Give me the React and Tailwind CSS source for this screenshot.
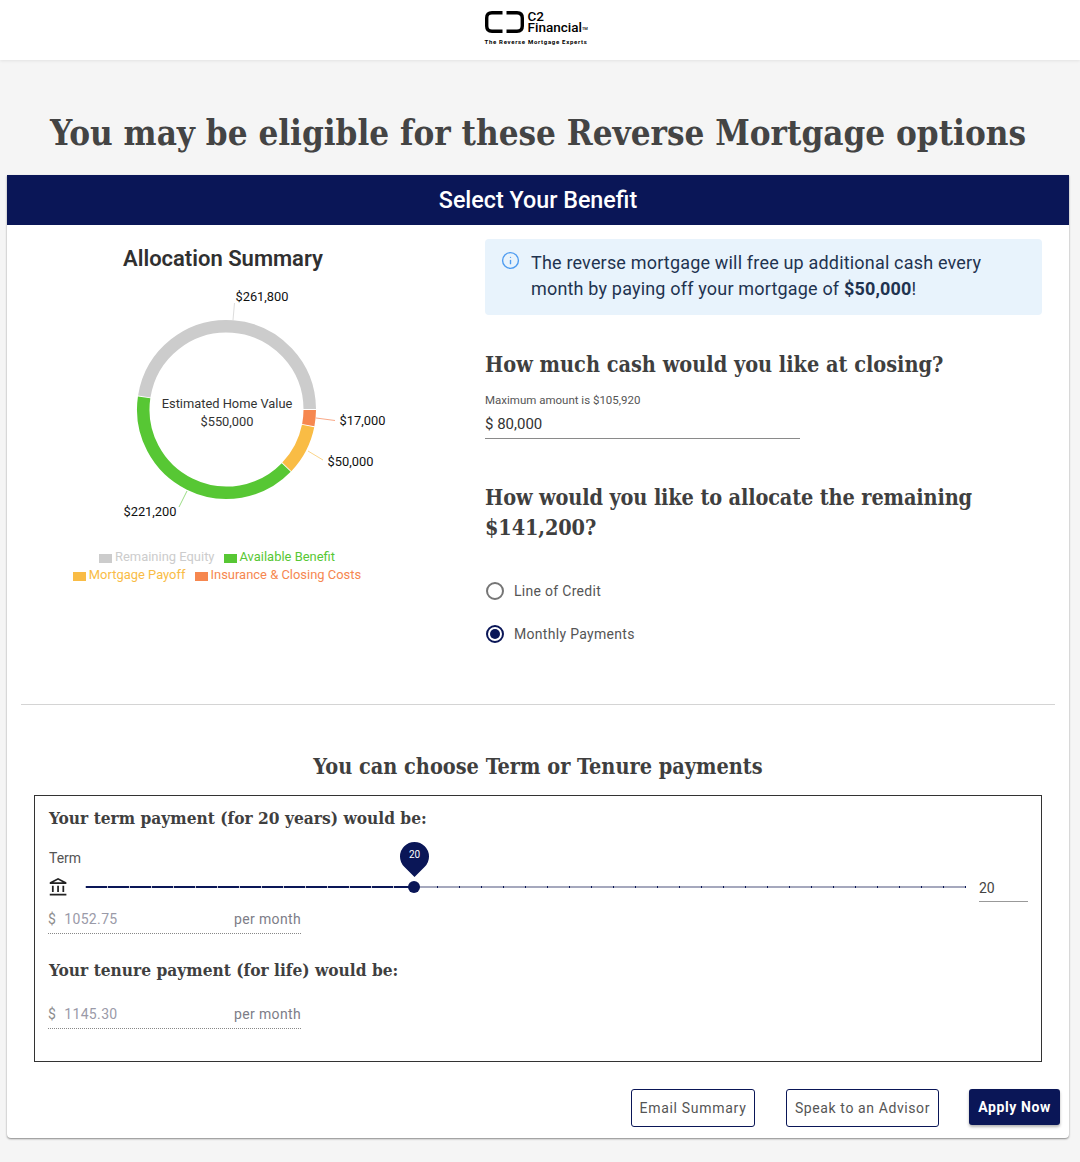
import { Info } from 'lucide-react';
import { MdOutlineAccountBalance } from 'react-icons/md';

const navy = 'bg-[#0a1657]';

// donut segments, clockwise from 3 o'clock
const segments = [
  { value: 17000, color: '#f6874f' },
  { value: 50000, color: '#f9bc45' },
  { value: 221200, color: '#57c734' },
  { value: 261800, color: '#cccccc' },
];

const leaders = [
  { d: 'M233 320 L234.5 303', color: '#dddddd' },
  { d: 'M316 418 L335 420.5', color: '#f9a988' },
  { d: 'M308 451 L323 460', color: '#fbd58a' },
  { d: 'M187 491 L179 507', color: '#9bdd85' },
];

const labels = [
  { x: 262, y: 301, text: '$261,800' },
  { x: 362.5, y: 425, text: '$17,000' },
  { x: 350.5, y: 466, text: '$50,000' },
  { x: 150, y: 516, text: '$221,200' },
];

function arcPath(startDeg, endDeg, r) {
  const cx = 226.5;
  const cy = 409.5;
  const a = (startDeg * Math.PI) / 180;
  const b = (endDeg * Math.PI) / 180;
  const large = endDeg - startDeg > 180 ? 1 : 0;
  return `M${cx + r * Math.cos(a)} ${cy + r * Math.sin(a)} A${r} ${r} 0 ${large} 1 ${cx + r * Math.cos(b)} ${cy + r * Math.sin(b)}`;
}

function Donut() {
  let angle = 0;
  const arcs = segments.map((s) => {
    const start = angle;
    angle += (s.value / 550000) * 360;
    return { ...s, start, end: angle };
  });
  return (
    <svg width="433" height="250" viewBox="7 280 433 250" className="block">
      {leaders.map((l) => (
        <path key={l.d} d={l.d} stroke={l.color} strokeWidth="1" fill="none" />
      ))}
      {arcs.map((a) => (
        <path key={a.color} d={arcPath(a.start + 0.3, a.end - 0.3, 83.25)} stroke={a.color} strokeWidth="12.5" fill="none" />
      ))}
      <text x="227" y="408" textAnchor="middle" fontSize="12.85" fill="#333333">Estimated Home Value</text>
      <text x="227" y="426" textAnchor="middle" fontSize="12.85" fill="#333333">$550,000</text>
      {labels.map((l) => (
        <text key={l.text} x={l.x} y={l.y} textAnchor="middle" fontSize="12.85" fill="#111111">{l.text}</text>
      ))}
    </svg>
  );
}

function LegendItem({ swatch, text, label }) {
  return (
    <span className="flex items-center">
      <span className={`w-[13px] h-[9px] mr-[3px] mt-[2px] ${swatch}`} />
      <span className={text}>{label}</span>
    </span>
  );
}

function Radio({ checked, label }) {
  return (
    <label className="flex items-center h-[24px] ml-[1px]">
      <span className={`w-[18px] h-[18px] rounded-full border-2 flex items-center justify-center ${checked ? 'border-[#0a1657]' : 'border-[#757575]'}`}>
        {checked && <span className="w-[10px] h-[10px] rounded-full bg-[#0a1657]" />}
      </span>
      <span className="ml-[10px] text-sm tracking-[0.3px] text-[#555555]">{label}</span>
    </label>
  );
}

function PerMonth({ value }) {
  return (
    <div className="w-[253px] flex items-center justify-between border-b border-dotted border-[#888888] h-[29px] text-sm tracking-[0.35px] text-[#9a9aa8]">
      <span>
        <span className="mr-[8px] text-[#8d8d8d]">$</span>
        {value}
      </span>
      <span className="text-[#7d7d87]">per month</span>
    </div>
  );
}

function Slider() {
  const ticks = Array.from({ length: 41 });
  return (
    <div className="relative flex-1 h-[2px] bg-[#a5a8bd]">
      <div className="absolute left-0 top-0 h-[2px] w-[329px] bg-[#0a1657]" />
      <div className="absolute inset-0 flex justify-between">
        {ticks.map((_, i) => (
          <span key={i} className={`w-[1px] h-[2px] ${i < 15 ? 'bg-[#c4c6d4]' : 'bg-[#0a1657]'}`} />
        ))}
      </div>
      <span className="absolute left-[323px] top-[-5px] w-[12px] h-[12px] rounded-full bg-[#0a1657]" />
      <div className="absolute left-[315px] top-[-44px] w-[29px] h-[29px] rounded-full rounded-br-none rotate-45 bg-[#0a1657]" />
      <span className="absolute left-[315px] top-[-41px] w-[29px] text-center text-[10px] leading-[20px] text-white">20</span>
    </div>
  );
}

export default function App() {
  const slab = "font-['DejaVu_Serif_Condensed','DejaVu_Serif',serif] font-bold [font-stretch:condensed]";
  return (
    <div className="min-h-[1162px] bg-[#f5f5f5] font-['Roboto',sans-serif] text-[#3f3f3f]">
      <header className="h-[60px] bg-white shadow-[0_1px_3px_rgba(0,0,0,0.08)] flex justify-center">
        <div className="w-[103px] mr-[8px] pt-[11px]">
          <div className="flex items-start">
            <svg width="39" height="22" viewBox="0 0 39 22" fill="none" stroke="#000" strokeWidth="3.4" className="shrink-0">
              <path d="M17.5 1.7 H7 Q1.7 1.7 1.7 7 V15 Q1.7 20.3 7 20.3 H17.5" />
              <path d="M21.5 1.7 H32 Q37.3 1.7 37.3 7 V15 Q37.3 20.3 32 20.3 H21.5" />
            </svg>
            <div className="ml-[4px] text-[13.5px] leading-[11px] font-medium text-black">
              <div>C2</div>
              <div className="whitespace-nowrap">Financial<sup className="text-[4px]">TM</sup></div>
            </div>
          </div>
          <div className="mt-[5px] text-[6px] leading-[7px] font-bold tracking-[0.7px] text-black whitespace-nowrap">The Reverse Mortgage Experts</div>
        </div>
      </header>

      <h1 className={`${slab} text-center text-[34.7px] leading-[44px] pt-[51px] pb-[20px] pr-[4px] text-[#444444]`}>You may be eligible for these Reverse Mortgage options</h1>

      <main className="mx-[7px] w-[1062px] h-[963px] bg-white rounded-b-[4px] shadow-[0_1px_2px_rgba(0,0,0,0.45)]">
        <div className={`${navy} h-[50px] flex items-center justify-center text-white text-[23.3px] font-medium`}>Select Your Benefit</div>

        <div className="flex h-[480px] mx-[14px] border-b border-[#d4d4d4]">
          <section className="w-[478px] ml-[-14px] shrink-0">
            <h2 className="w-[432px] text-center text-[22px] leading-[30px] font-semibold text-[#303030] mt-[19px] mb-[6px]">Allocation Summary</h2>
            <Donut />
            <div className="w-[420px] mt-[18px] text-[12.95px] leading-[18px] flex flex-col items-center">
              <div className="flex gap-[9px]">
                <LegendItem swatch="bg-[#cccccc]" text="text-[#cccccc]" label="Remaining Equity" />
                <LegendItem swatch="bg-[#57c734]" text="text-[#57c734]" label="Available Benefit" />
              </div>
              <div className="flex gap-[9px]">
                <LegendItem swatch="bg-[#f9bc45]" text="text-[#f9bc45]" label="Mortgage Payoff" />
                <LegendItem swatch="bg-[#f6874f]" text="text-[#f6874f]" label="Insurance & Closing Costs" />
              </div>
            </div>
          </section>

          <section className="w-[557px] pt-[14px]">
            <div className="h-[76px] rounded-[4px] bg-[#e8f3fc] flex pl-[16px] pt-[11px] text-[18px] tracking-[0.18px] leading-[26px] text-[#1f3350]">
              <Info className="w-[19px] h-[19px] mt-[1px] mr-[11px] text-[#4f9cf0]" strokeWidth={1.75} />
              <p>The reverse mortgage will free up additional cash every<br />month by paying off your mortgage of <b className="font-bold">$50,000</b>!</p>
            </div>
            <h3 className={`${slab} text-[21.5px] leading-[30px] mt-[35px]`}>How much cash would you like at closing?</h3>
            <div className="mt-[13px] text-[11.5px] leading-[14px] text-[#555555]">Maximum amount is $105,920</div>
            <div className="w-[315px] mt-[7px] h-[25px] border-b border-[#8a8a8a] text-[15px] leading-[20px] text-[#333333]">$ 80,000</div>
            <h3 className={`${slab} text-[21.5px] tracking-[-0.13px] leading-[30px] mt-[44px]`}>How would you like to allocate the remaining<br />$141,200?</h3>
            <div className="mt-[36px] flex flex-col gap-[19px]">
              <Radio label="Line of Credit" />
              <Radio checked label="Monthly Payments" />
            </div>
          </section>
        </div>

        <h3 className={`${slab} text-center text-[21.5px] leading-[30px] mt-[47px]`}>You can choose Term or Tenure payments</h3>

        <div className="mx-[27px] mt-[13px] h-[267px] border border-[#333333] px-[13px] pt-[9px]">
          <h4 className={`${slab} ml-[1px] text-[17.2px] leading-[26px]`}>Your term payment (for 20 years) would be:</h4>
          <div className="ml-[1px] mt-[18px] text-sm leading-[18px] text-[#555555]">Term</div>
          <div className="flex items-center h-[24px] mt-[8px]">
            <MdOutlineAccountBalance className="w-[21px] h-[21px] text-[#222222] shrink-0" />
            <div className="flex-1 ml-[16px] mr-[13px] flex items-center"><Slider /></div>
            <div className="w-[49px] h-[25px] mt-[5px] border-b border-[#999999] text-sm leading-[22px] text-[#444444]">20</div>
          </div>
          <div className="mt-[6px]"><PerMonth value="1052.75" /></div>
          <h4 className={`${slab} ml-[1px] text-[17.2px] leading-[26px] mt-[23px]`}>Your tenure payment (for life) would be:</h4>
          <div className="mt-[17px]"><PerMonth value="1145.30" /></div>
        </div>

        <div className="flex justify-end items-start mt-[27px] pr-[9px] text-sm tracking-[0.7px]">
          <button className="w-[124px] h-[38px] border border-[#0a1657] rounded-[3px] text-[#555555] whitespace-nowrap">Email Summary</button>
          <button className="ml-[31px] w-[153px] h-[38px] border border-[#0a1657] rounded-[3px] text-[#555555] tracking-[0.6px] whitespace-nowrap">Speak to an Advisor</button>
          <button className={`ml-[30px] w-[91px] h-[36px] ${navy} rounded-[3px] text-white font-bold tracking-[0.6px] shadow-[0_2px_3px_rgba(0,0,0,0.3)] whitespace-nowrap`}>Apply Now</button>
        </div>
      </main>
    </div>
  );
}
